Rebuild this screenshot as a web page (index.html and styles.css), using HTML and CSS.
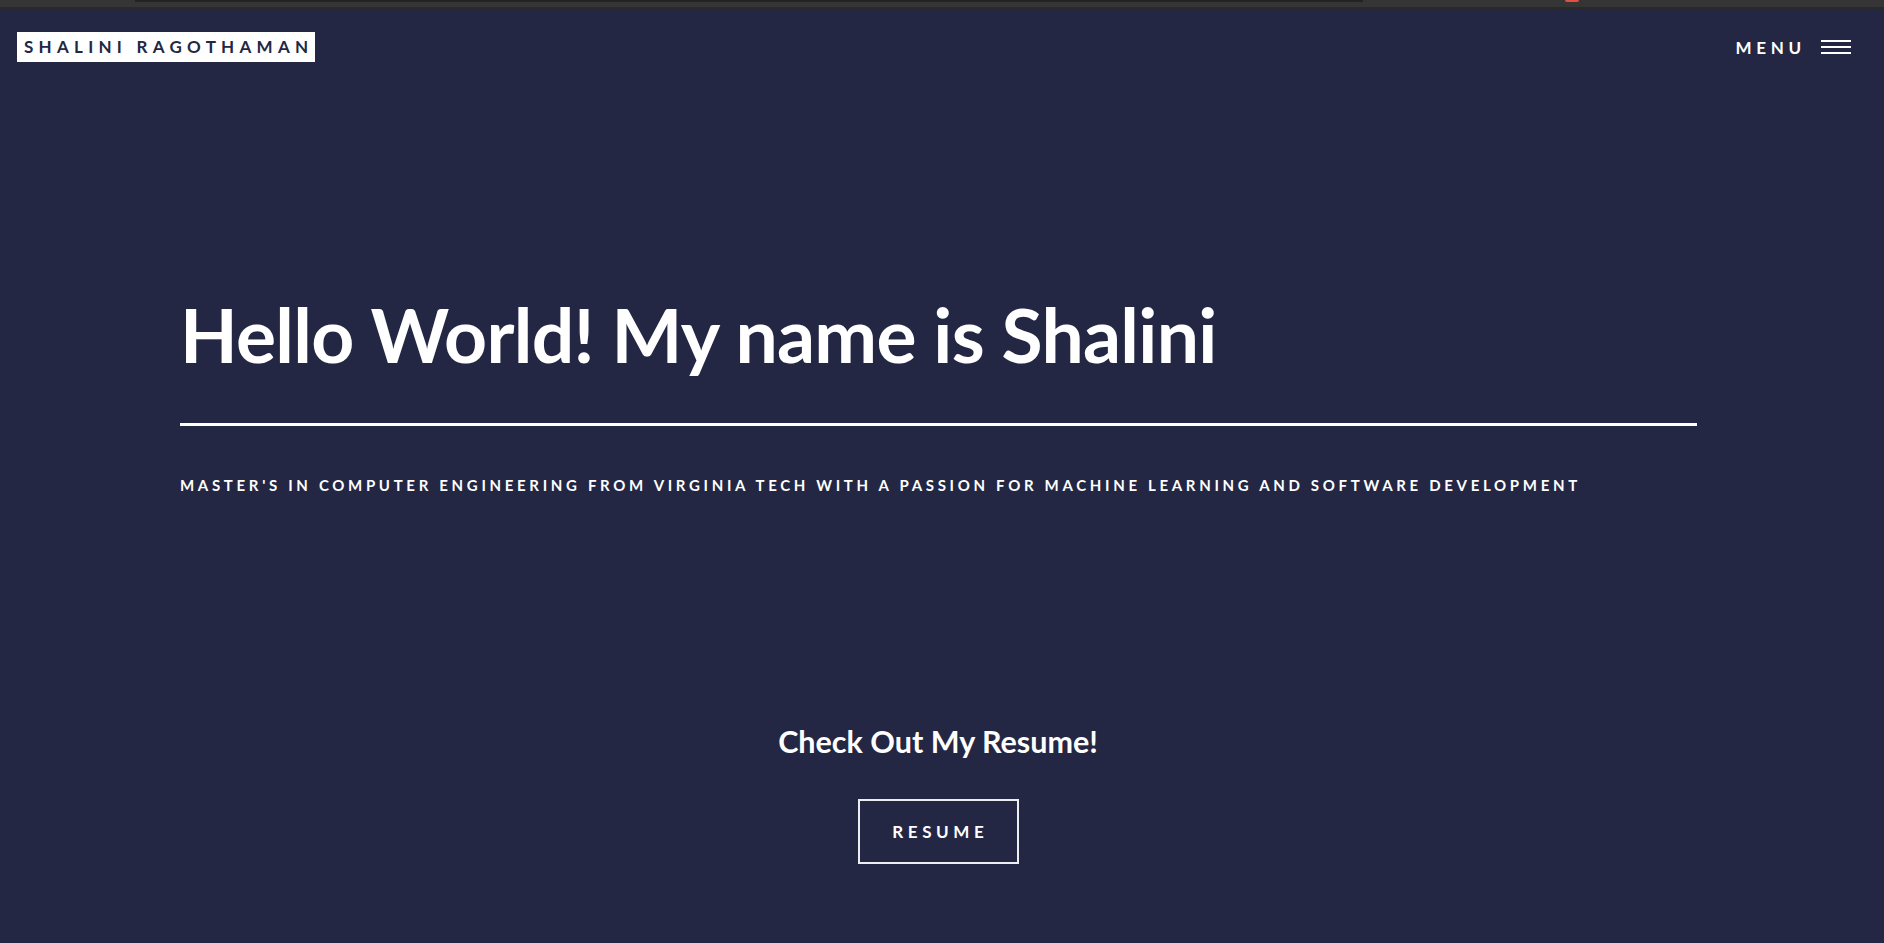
FILE: index.html
```html
<!DOCTYPE html>
<html lang="en">
<head>
<meta charset="utf-8">
<title>Shalini Ragothaman</title>
<link rel="stylesheet" href="styles.css">
</head>
<body>
<div class="chrome">
  <div class="chrome-tab"></div>
  <div class="chrome-dot"></div>
</div>
<header class="topbar">
  <a class="logo" href="#">SHALINI RAGOTHAMAN</a>
  <a class="menu" href="#">
    <span class="menu-label">MENU</span>
    <span class="burger"><i></i><i></i><i></i></span>
  </a>
</header>
<main class="hero">
  <h1 class="hero-title">Hello World! My name is Shalini</h1>
  <hr class="hero-rule">
  <p class="hero-sub">MASTER'S IN COMPUTER ENGINEERING FROM VIRGINIA TECH WITH A PASSION FOR MACHINE LEARNING AND SOFTWARE DEVELOPMENT</p>
</main>
<section class="resume">
  <h2 class="resume-title">Check Out My Resume!</h2>
  <a class="resume-btn" href="#">RESUME</a>
</section>
</body>
</html>
```
FILE: styles.css
```css
* { box-sizing: border-box; }
html, body { margin: 0; padding: 0; }
body {
  background: #232744;
  color: #fff;
  font-family: "Lato", "Open Sans", sans-serif;
  height: 943px;
  overflow: hidden;
}
a { text-decoration: none; color: inherit; }

.chrome {
  position: relative;
  height: 9px;
  background: #353535;
  border-bottom: 2px solid #2a2a2a;
}
.chrome-tab {
  position: absolute;
  left: 135px;
  top: 0;
  width: 1228px;
  height: 2px;
  background: #232323;
}
.chrome-dot {
  position: absolute;
  left: 1565px;
  top: 0;
  width: 14px;
  height: 2px;
  background: #e0513f;
  border-radius: 0 0 4px 4px;
}

.topbar {
  display: flex;
  justify-content: space-between;
  align-items: center;
  padding: 23px 33px 0 17px;
}
.logo {
  display: block;
  background: #fff;
  color: #232744;
  font-weight: 700;
  font-size: 17px;
  letter-spacing: 0.31em;
  height: 30px;
  line-height: 30px;
  padding: 0 2px 0 7px;
}
.menu {
  display: flex;
  align-items: center;
  gap: 15px;
  font-weight: 700;
  font-size: 17px;
  letter-spacing: 0.28em;
  color: #fff;
}
.burger {
  display: flex;
  flex-direction: column;
  gap: 4px;
  width: 30px;
}
.burger i {
  display: block;
  height: 2px;
  background: #fff;
}

.hero {
  width: 1697px;
  padding: 0 0 0 180px;
  margin-top: 235px;
}
.hero-title {
  margin: 0;
  font-size: 75px;
  font-weight: 700;
  line-height: 1;
  letter-spacing: -0.7px;
}
.hero-rule {
  margin: 51px 0 0;
  border: 0;
  height: 3px;
  background: #fff;
}
.hero-sub {
  margin: 50px 0 0;
  font-size: 15px;
  font-weight: 700;
  letter-spacing: 0.245em;
  white-space: nowrap;
}

.resume {
  width: 1876px;
  display: flex;
  flex-direction: column;
  align-items: center;
  margin-top: 229px;
}
.resume-title {
  margin: 0;
  font-size: 30.5px;
  font-weight: 700;
  line-height: 1.2;
}
.resume-btn {
  margin-top: 39px;
  width: 161px;
  height: 65px;
  border: 2px solid #eceef2;
  display: flex;
  align-items: center;
  justify-content: center;
  font-size: 17px;
  font-weight: 700;
  letter-spacing: 0.27em;
  padding-left: 0.27em;
}
```
